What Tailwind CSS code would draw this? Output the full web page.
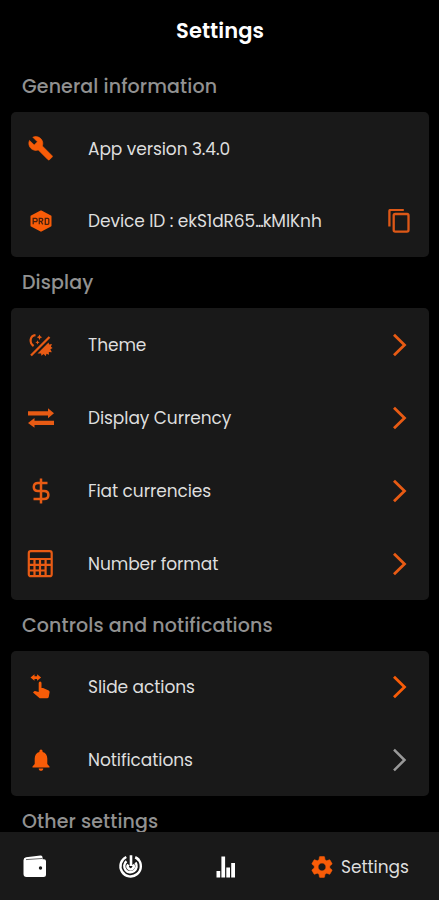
<!DOCTYPE html>
<html lang="en">
<head>
<meta charset="utf-8">
<title>Settings</title>
<script src="https://cdn.jsdelivr.net/npm/@tailwindcss/browser@4"></script>
</head>
<body class="bg-black">
<div class="flex h-[900px] w-[439px] flex-col overflow-hidden bg-black font-[Poppins,Inter,sans-serif] text-[17px] tracking-[-0.07px] text-[#dedede]">
  <main class="flex h-[832px] shrink-0 flex-col overflow-hidden pr-[10px] pl-[11px]">
    <h1 class="flex h-[61px] shrink-0 items-center justify-center text-[21px] font-semibold tracking-[0.05px] text-white">Settings</h1>

    <h2 class="flex h-[51px] shrink-0 items-center pt-[2px] pl-[11px] text-[19px] font-medium tracking-[0.12px] text-[#919191]">General information</h2>
    <section class="flex h-[145px] shrink-0 flex-col rounded-[5px] bg-[#191919] text-[#f85c08]">
      <div class="flex flex-1 items-center pr-[18px] pl-[15px]">
        <svg class="mr-[34px] size-7" viewBox="0 0 28 28" fill="currentColor"><path stroke="currentColor" stroke-width=".6" transform="translate(1.8 1.4) scale(1.07)" d="M22.700 19l-9.100-9.100c.9-2.300.4-5-1.500-6.900-2-2-5-2.400-7.400-1.300L9 6 6 9 1.600 4.700C.4 7.100.9 10.100 2.900 12.100c1.900 1.900 4.600 2.400 6.900 1.500l9.100 9.100c.4.4 1 .4 1.400 0l2.300-2.300c.5-.4.5-1.100.1-1.400z"/></svg>
        <span class="pt-[2px] text-[#dedede]">App version 3.4.0</span>
      </div>
      <div class="flex flex-1 items-center pr-[18px] pl-[15px]">
        <svg class="mr-[34px] size-7" viewBox="0 0 28 28"><path fill="currentColor" stroke="currentColor" stroke-width="2" stroke-linejoin="round" d="M15 4.500l9.500 4.800v9.400l-9.500 5-9.500-5V9.300z"/><path fill="none" stroke="#4a210c" stroke-width="1.300" d="M7.200 17.300v-6H9.700q1.500 0 1.500 1.700T9.700 14.600H7.200M13.300 17.300v-6h2q1.500 0 1.500 1.500T15.300 14.300h-2M15 14.300l1.800 3M19.300 11.300h2.500q1 0 1 1v4q0 1-1 1h-2.500z"/></svg>
        <span class="pt-[2px] text-[#dedede]">Device ID : ekS1dR65<span class="tracking-[-1.1px]">...</span>kMIKnh</span>
        <svg class="ml-auto size-6" viewBox="0 0 24 24" fill="none" stroke="#dd5817" stroke-width="2.300"><rect x="6.700" y="5" width="14.800" height="17.600" rx="1.500"/><path d="M2.400 17.500V2.300q0-1.500 1.500-1.500H16.800"/></svg>
      </div>
    </section>

    <h2 class="flex h-[51px] shrink-0 items-center pt-[2px] pl-[11px] text-[19px] font-medium tracking-[0.12px] text-[#919191]">Display</h2>
    <section class="flex h-[292px] shrink-0 flex-col rounded-[5px] bg-[#191919] text-[#e85b14]">
      <div class="flex flex-1 items-center pr-[17px] pl-[15px]">
        <svg class="mr-[34px] size-7" viewBox="0 0 28 28"><path fill="none" stroke="currentColor" stroke-width="2.300" d="M5 24.500L23.500 6"/><path fill="none" stroke="currentColor" stroke-width="2.200" d="M9.500 4.200C4 4.800 2.800 11.500 7.600 15"/><path fill="currentColor" d="M13.500 3.500l.9 1.800 1.800.9-1.800.9-.9 1.800-.9-1.800-1.800-.9 1.800-.9zM11.500 9.300l.7 1.400 1.400.7-1.400.7-.7 1.400-.7-1.400-1.400-.7 1.400-.7zM11.500 22.500L22.500 11.500l.7 1.900 2.700-.4-1 2.700 1.700 1.300-2.200 1.200 1.400 3-3-.3.200 2.900-2.500-1-.8 2.500-2-2.200-2.300 1.600-.3-2.200z"/></svg>
        <span class="pt-[2px] text-[#dedede]">Theme</span>
        <svg class="ml-auto size-6" viewBox="0 0 24 24" fill="none" stroke="currentColor" stroke-width="2.800"><path d="M6 1.700l10.500 10.300L6 22.300"/></svg>
      </div>
      <div class="flex flex-1 items-center pr-[17px] pl-[15px]">
        <svg class="mr-[34px] size-7" viewBox="0 0 28 28" fill="currentColor"><path d="M2 7.200h20V4.200l6 5-6 5v-2.600H2zM28.300 16.700v4.200H8.500v2.900L2 18.900l6.500-5v2.800z"/></svg>
        <span class="pt-[2px] text-[#dedede]">Display Currency</span>
        <svg class="ml-auto size-6" viewBox="0 0 24 24" fill="none" stroke="currentColor" stroke-width="2.800"><path d="M6 1.700l10.500 10.300L6 22.300"/></svg>
      </div>
      <div class="flex flex-1 items-center pr-[17px] pl-[15px]">
        <svg class="mr-[34px] size-7" viewBox="0 0 28 28" fill="none" stroke="currentColor" stroke-width="2.500"><path d="M15 1.500v25M21.500 6H12q-4.200 0-4.200 4t4.200 4h6q4.400 0 4.400 4t-4.400 4H7.500"/></svg>
        <span class="pt-[2px] text-[#dedede]">Fiat currencies</span>
        <svg class="ml-auto size-6" viewBox="0 0 24 24" fill="none" stroke="currentColor" stroke-width="2.800"><path d="M6 1.700l10.500 10.300L6 22.300"/></svg>
      </div>
      <div class="flex flex-1 items-center pr-[17px] pl-[15px]">
        <svg class="mr-[34px] size-7" viewBox="0 0 28 28" fill="none" stroke="currentColor" stroke-width="2.200"><rect x="2.800" y="1.200" width="22.900" height="25" rx="2"/><path d="M3 9h23M3 14.900h17M3 20.500h17M8.500 9v17M14 9v17M19.600 9v17M20 14.900h6"/></svg>
        <span class="pt-[2px] text-[#dedede]">Number format</span>
        <svg class="ml-auto size-6" viewBox="0 0 24 24" fill="none" stroke="currentColor" stroke-width="2.800"><path d="M6 1.700l10.500 10.300L6 22.300"/></svg>
      </div>
    </section>

    <h2 class="flex h-[51px] shrink-0 items-center pt-[2px] pl-[11px] text-[19px] font-medium tracking-[0.12px] text-[#919191]">Controls and notifications</h2>
    <section class="flex h-[145px] shrink-0 flex-col rounded-[5px] bg-[#191919] text-[#f85c08]">
      <div class="flex flex-1 items-center pr-[17px] pl-[15px]">
        <svg class="mr-[34px] size-7" viewBox="0 0 28 28" fill="currentColor"><path d="M4.500 4.500l4-3.300v2.100h2.600V1.200l4 3.300-4 3.300V5.900H8.500v1.900zM12.700 10q0-1.500 1.400-1.500t1.400 1.500v5h1.600l5.600 2.500q1 .5.900 1.700l-.8 4.600q-.3 1.500-1.800 1.500h-6.500q-.9 0-1.400-.6L7 19.500l.9-1.100q.5-.5 1.200-.3l3.600.8z"/></svg>
        <span class="pt-px text-[#dedede]">Slide actions</span>
        <svg class="ml-auto size-6" viewBox="0 0 24 24" fill="none" stroke="currentColor" stroke-width="2.800"><path d="M6 1.700l10.500 10.300L6 22.300"/></svg>
      </div>
      <div class="flex flex-1 items-center pr-[17px] pl-[15px]">
        <svg class="mr-[34px] size-7" viewBox="0 0 28 28" fill="currentColor"><path d="M15 24.800c1.300 0 2.300-.9 2.300-2.300h-4.600c0 1.400 1 2.300 2.300 2.300zM21.300 18v-5.500c0-3.300-1.800-5.900-4.700-6.600v-.7a1.600 1.600 0 0 0-3.200 0v.7c-2.900.7-4.700 3.300-4.700 6.600V18l-2.200 2.500v1h17v-1z"/></svg>
        <span class="pt-[2px] text-[#dedede]">Notifications</span>
        <svg class="ml-auto size-6 text-[#999]" viewBox="0 0 24 24" fill="none" stroke="currentColor" stroke-width="2.500"><path d="M6 1.700l10.500 10.300L6 22.300"/></svg>
      </div>
    </section>

    <h2 class="flex h-[51px] shrink-0 items-center pt-[2px] pl-[11px] text-[19px] font-medium tracking-[0.12px] text-[#919191]">Other settings</h2>
  </main>

  <nav class="flex h-[68px] shrink-0 items-center bg-[#191919] pt-[2px] pl-[22px] text-white">
    <svg class="mr-[70px] size-[26px]" viewBox="0 0 26 26"><path fill="currentColor" d="M1.500 6.200Q1.500 3.500 4 3.200L18.500 1.500q2-.2 2 1.700v2H22q2 0 2 2V20.500q0 2.500-2.500 2.500h-17q-3 0-3-3z"/><path fill="none" stroke="#666" stroke-width="1" d="M4 5.600L20 4.500"/><circle cx="18.500" cy="14" r="1.700" fill="#191919"/></svg>
    <svg class="mr-[70px] size-[26px]" viewBox="0 0 26 26" fill="none" stroke="currentColor" stroke-width="2.400"><path d="M8.300 3A10.200 10.200 0 1 0 19.500 4.700"/><path d="M8.500 7.300A6.200 6.200 0 1 0 17.500 8.500"/><path stroke-width="2.600" d="M13 1.200V12M10.300 10.500a3 3 0 1 0 4.700 0"/><path stroke-width="2.600" d="M17.200 3.200q2 .8 3.500 2.700"/></svg>
    <svg class="mr-[70px] size-[26px]" viewBox="0 0 26 26" fill="currentColor"><path d="M2.500 17h3.700v6.500H2.500zM7.400 2.500h3.700v21H7.400zM12.300 13.500H16v10h-3.700zM17.200 9h3.800v14.500h-3.800z"/></svg>
    <svg class="mr-[6px] -ml-px size-[26px] text-[#f85c08]" viewBox="0 0 24 24" fill="currentColor"><path stroke="currentColor" stroke-width=".5" d="M19.140 12.940c.04-.3.060-.61.060-.94 0-.32-.02-.64-.07-.94l2.030-1.580c.18-.14.23-.41.12-.61l-1.920-3.320c-.12-.22-.37-.29-.59-.22l-2.390.96c-.5-.38-1.030-.7-1.620-.94l-.36-2.540c-.04-.24-.24-.41-.48-.41h-3.840c-.24 0-.43.17-.47.41l-.36 2.540c-.59.24-1.130.57-1.620.94l-2.390-.96c-.22-.08-.47 0-.59.22L2.740 8.870c-.12.21-.08.47.12.61l2.030 1.580c-.05.3-.09.63-.09.94s.02.64.07.94l-2.030 1.580c-.18.14-.23.41-.12.61l1.920 3.320c.12.22.37.29.59.22l2.390-.96c.5.38 1.030.7 1.620.94l.36 2.540c.05.24.24.41.48.41h3.840c.24 0 .44-.17.47-.41l.36-2.540c.59-.24 1.130-.56 1.620-.94l2.390.96c.22.08.47 0 .59-.22l1.920-3.320c.12-.22.07-.47-.12-.61l-2.010-1.580zM12 15.600c-1.980 0-3.600-1.620-3.600-3.600s1.620-3.600 3.600-3.600 3.600 1.620 3.600 3.600-1.620 3.600-3.600 3.600z"/></svg>
    <span class="pt-[2px] text-[#dedede]">Settings</span>
  </nav>
</div>
</body>
</html>
